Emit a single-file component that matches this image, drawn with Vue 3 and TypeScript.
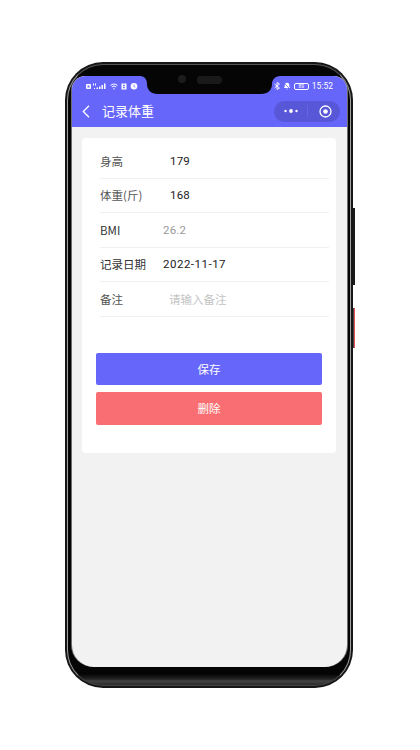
<script setup lang="ts">
const rows = [
  { label: '身高', value: '179', cls: 'v1', dark: false },
  { label: '体重(斤)', value: '168', cls: 'v1', dark: false },
  { label: 'BMI', value: '26.2', cls: 'v2 muted', dark: true },
  { label: '记录日期', value: '2022-11-17', cls: 'v2 wide', dark: true },
  { label: '备注', value: '请输入备注', cls: 'v3 placeholder', dark: false },
]
</script>

<template>
  <div class="page">
    <div class="phone">
      <span class="side side-black"></span>
      <span class="side side-red"></span>
      <div class="bezel">
        <svg class="notch" width="140" height="22" viewBox="0 0 140 22" fill="#050505">
          <path d="M0 0H140V2C135 2 132 6 132 10C132 16 128 20 121 20H18C11 20 7 16 7 10C7 6 5 2 0 2Z" />
        </svg>
        <span class="camera"></span>
        <span class="speaker"></span>
        <div class="screen">
          <header class="header">
            <div class="status">
              <div class="status-left">
                <svg width="21" height="7" viewBox="0 0 21 7" fill="#fff">
                  <rect x="0" y="1" width="5" height="5" rx="1" />
                  <rect x="1.500" y="2.500" width="2" height="2" fill="#6766fb" />
                  <rect x="7" y="0.500" width="1" height="2" />
                  <rect x="9" y="0.500" width="1" height="2" />
                  <rect x="8" y="5" width="1" height="1" />
                  <rect x="10.500" y="4.500" width="1.500" height="1.500" />
                  <rect x="13" y="3.500" width="1.500" height="2.500" />
                  <rect x="15.500" y="2" width="1.500" height="4" />
                  <rect x="18" y="0.500" width="1.500" height="5.500" />
                </svg>
                <svg width="8" height="7" viewBox="0 0 8 7" fill="none" stroke="#fff" stroke-width="1">
                  <path d="M0.500 2.500a5 5 0 0 1 7 0M1.800 4a3.200 3.200 0 0 1 4.400 0" />
                  <circle cx="4" cy="5.800" r="0.700" fill="#fff" stroke="none" />
                </svg>
                <svg width="6" height="7" viewBox="0 0 6 7" fill="#fff">
                  <path d="M0.500 0.500h5v6h-5z" />
                  <path d="M2 1.800h1.800v1.500h-1.800zM2 4h1.800v1.200h-1.800z" fill="#6766fb" />
                </svg>
                <svg width="8" height="8" viewBox="0 0 8 8" fill="#fff">
                  <circle cx="4" cy="4.300" r="3.300" />
                  <path d="M4 2.500v2l1.300 0.700" stroke="#6766fb" stroke-width="0.800" fill="none" />
                </svg>
              </div>
              <div class="status-right">
                <svg width="6" height="8" viewBox="0 0 6 8" fill="none" stroke="#fff" stroke-width="0.900">
                  <path d="M0.500 2l5 4-2.500 1.500v-7l2.500 1.500-5 4" />
                </svg>
                <svg width="8" height="8" viewBox="0 0 8 8" fill="#fff">
                  <path d="M4 0.700a2.300 2.300 0 0 1 2.300 2.300v2l1 1h-6.600l1-1v-2a2.300 2.300 0 0 1 2.300-2.300zM3.200 6.700h1.600l-0.800 1z" />
                  <path d="M0.800 0.600l6.400 6.800" stroke="#6766fb" stroke-width="0.800" />
                </svg>
                <span class="battery"><span class="battery-text">89</span></span>
                <span class="time">15:52</span>
              </div>
            </div>
            <div class="nav">
              <svg class="back" width="8" height="13" viewBox="0 0 8 13" fill="none" stroke="#fff" stroke-width="1.300">
                <path d="M7 0.800L1.300 6.500L7 12.200" />
              </svg>
              <span class="title">记录体重</span>
              <div class="capsule">
                <svg class="dots" width="14" height="6" viewBox="0 0 14 6" fill="#fff">
                  <circle cx="1.500" cy="3" r="1.200" />
                  <circle cx="7" cy="3" r="1.900" />
                  <circle cx="12.500" cy="3" r="1.200" />
                </svg>
                <span class="divider"></span>
                <svg class="target" width="13" height="13" viewBox="0 0 13 13" fill="none" stroke="#fff">
                  <circle cx="6.500" cy="6.500" r="5.500" stroke-width="1.300" />
                  <circle cx="6.500" cy="6.500" r="2.300" fill="#fff" stroke="none" />
                </svg>
              </div>
            </div>
          </header>

          <main class="content">
            <section class="card">
              <div v-for="row in rows" :key="row.label" class="row">
                <span class="label" :class="{ dark: row.dark }">{{ row.label }}</span>
                <span class="value" :class="row.cls">{{ row.value }}</span>
              </div>
              <div class="actions">
                <button class="btn save">保存</button>
                <button class="btn del">删除</button>
              </div>
            </section>
          </main>
        </div>
      </div>
    </div>
  </div>
</template>

<style>
html, body { margin: 0; background: #fff; }
</style>

<style scoped>
.page {
  width: 420px;
  height: 750px;
  background: #fff;
  padding: 62px 0 0 65px;
  box-sizing: border-box;
  overflow: hidden;
  font-family: "Noto Sans CJK SC", "Noto Sans", sans-serif;
}
.phone {
  position: relative;
  width: 288px;
  height: 626px;
  box-sizing: border-box;
  padding: 2px;
  border-radius: 38px;
  background: #161616;
}
.side {
  position: absolute;
  right: -2px;
  width: 2px;
}
.side-black { top: 146px; height: 77px; background: #1a1a1a; }
.side-red {
  top: 246px;
  height: 40px;
  background: linear-gradient(to right, #444 50%, #e8505a 50%);
}
.bezel {
  position: relative;
  height: 100%;
  box-sizing: border-box;
  padding: 11px 3px 18px 4px;
  border-radius: 36px;
  border: 1px solid #a0a0a0;
  border-top-color: #555;
  border-bottom-color: #444;
  background: linear-gradient(to top, #2b2b2b 0, #444 4px, #222 6px, #111 9px, #050505 11px);
}
.notch {
  position: absolute;
  top: 9px;
  left: 72px;
  z-index: 2;
}
.camera {
  position: absolute;
  left: 110px;
  top: 10px;
  width: 8px;
  height: 8px;
  border-radius: 50%;
  background: #1c1c1c;
  z-index: 3;
}
.speaker {
  position: absolute;
  left: 129px;
  top: 11px;
  width: 25px;
  height: 8px;
  border-radius: 4px;
  background: #1a1a1a;
  z-index: 3;
}
.screen {
  height: 100%;
  border-radius: 14px 14px 22px 22px;
  background: #f2f2f2;
  overflow: hidden;
  display: flex;
  flex-direction: column;
  box-shadow: -1px 0 0 #6e6e6e, 1px 0 0 #6e6e6e;
}
.header {
  height: 51px;
  flex: none;
  background: #6766fb;
  color: #fff;
}
.status {
  height: 19px;
  display: flex;
  justify-content: space-between;
  align-items: center;
  padding: 1px 14px 0 14px;
  box-sizing: border-box;
}
.status-left, .status-right {
  display: flex;
  align-items: center;
  gap: 3px;
}
.battery {
  box-sizing: border-box;
  width: 15px;
  height: 7px;
  border: 1px solid #fff;
  border-radius: 2px;
  display: flex;
  align-items: center;
  justify-content: center;
}
.battery-text {
  font-size: 5px;
  line-height: 5px;
  font-family: "Liberation Sans", sans-serif;
}
.time {
  font-size: 8.500px;
  line-height: 10px;
  font-family: "Roboto", sans-serif;
}
.nav {
  height: 32px;
  display: flex;
  align-items: center;
  padding: 0 7px 0 10px;
}
.back { flex: none; }
.title {
  margin-left: 12px;
  font-size: 13px;
  line-height: 18px;
}
.capsule {
  margin-left: auto;
  width: 66px;
  height: 21px;
  border-radius: 11px;
  background: #5857d8;
  display: flex;
  align-items: center;
  box-sizing: border-box;
  padding: 0 0 0 10px;
}
.divider {
  width: 1px;
  height: 12px;
  background: #6665e6;
  margin: 0 11px 0 9px;
}
.content {
  flex: 1;
  padding: 11px 11px 0 10px;
}
.card {
  height: 315px;
  background: #fff;
  border-radius: 4px;
  padding: 6px 7px 0 18px;
  box-sizing: border-box;
}
.row {
  height: 34.500px;
  border-bottom: 1px solid #f0f0f0;
  box-sizing: border-box;
  display: flex;
  align-items: center;
  font-size: 11.500px;
  line-height: 16px;
  position: relative;
}
.label { color: #555; }
.label.dark { color: #333; }
.value {
  position: absolute;
  font-family: "Roboto", "Noto Sans CJK SC", sans-serif;
  letter-spacing: 0.200px;
  color: #222;
}
.v1 { left: 70px; }
.v2 { left: 63px; }
.v3 { left: 69px; }
.wide { letter-spacing: 0.500px; }
.muted { color: #999; }
.placeholder {
  color: #c4c4c4;
  font-family: "Noto Sans CJK SC", sans-serif;
  letter-spacing: 0;
}
.actions {
  margin-top: 36px;
  margin-left: -4px;
  margin-right: 7px;
  display: flex;
  flex-direction: column;
  gap: 7px;
}
.btn {
  height: 32.500px;
  border: none;
  border-radius: 2px;
  color: #fff;
  font-family: "Noto Sans CJK SC", sans-serif;
  font-size: 11.500px;
  padding: 0;
}
.save { background: #6766fb; }
.del { background: #f96e72; }
</style>
